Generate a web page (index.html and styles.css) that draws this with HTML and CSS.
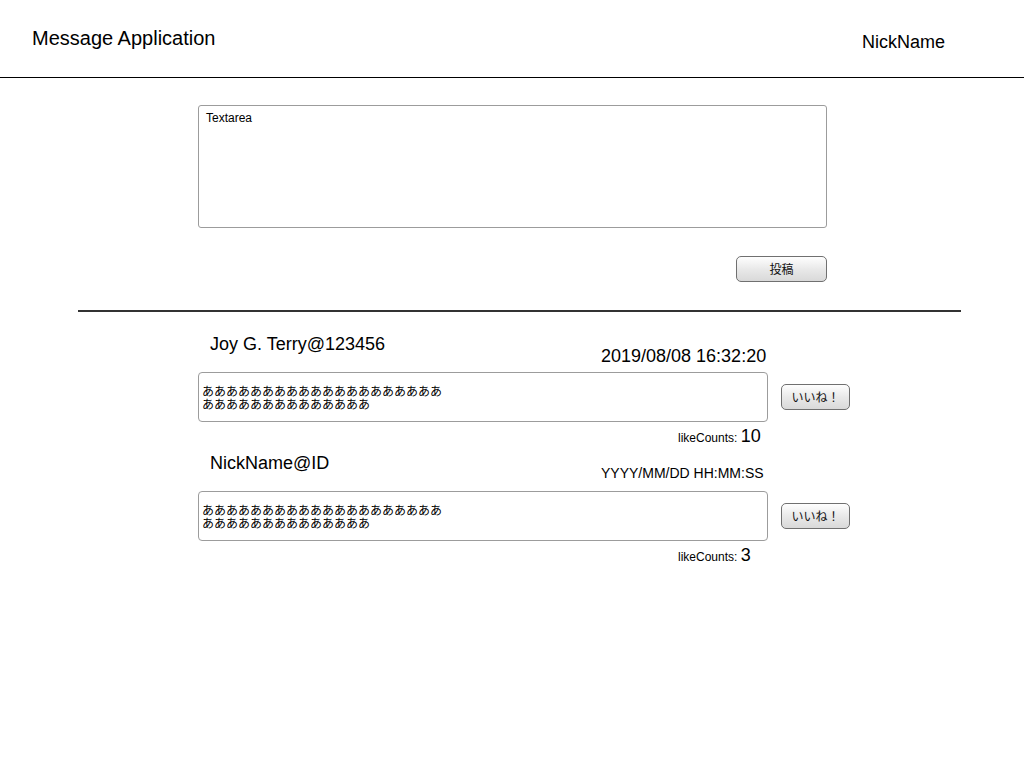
FILE: index.html
```html
<!DOCTYPE html>
<html lang="ja">
<head>
<meta charset="utf-8">
<title>Message Application</title>
<link rel="stylesheet" href="styles.css">
</head>
<body>
<header class="app-header">
  <h1 class="app-title">Message Application</h1>
  <div class="app-user">NickName</div>
</header>
<main>
  <section class="composer">
    <textarea class="composer-input">Textarea</textarea>
    <div class="composer-actions">
      <button class="btn btn-post">投稿</button>
    </div>
  </section>
  <hr class="divider">
  <section class="feed">
    <article class="post">
      <div class="post-head">
        <div class="post-user">Joy G. Terry@123456</div>
        <div class="post-date">2019/08/08 16:32:20</div>
      </div>
      <div class="post-body">
        <div class="post-message">ああああああああああああああああああああ<br>ああああああああああああああ</div>
        <button class="btn btn-like">いいね！</button>
      </div>
      <div class="post-likes">likeCounts: <span class="like-num">10</span></div>
    </article>
    <article class="post">
      <div class="post-head">
        <div class="post-user">NickName@ID</div>
        <div class="post-date post-date-small">YYYY/MM/DD HH:MM:SS</div>
      </div>
      <div class="post-body">
        <div class="post-message">ああああああああああああああああああああ<br>ああああああああああああああ</div>
        <button class="btn btn-like">いいね！</button>
      </div>
      <div class="post-likes">likeCounts: <span class="like-num">3</span></div>
    </article>
  </section>
</main>
</body>
</html>
```
FILE: styles.css
```css
* { box-sizing: border-box; }
html, body { margin: 0; padding: 0; background: #fff; }
body {
  font-family: "Liberation Sans", Arial, "Noto Sans CJK JP", sans-serif;
  color: #000;
}
.app-header {
  height: 78px;
  border-bottom: 1px solid #000;
  display: flex;
  justify-content: space-between;
  align-items: flex-start;
  padding: 27px 79px 0 32px;
}
.app-title {
  margin: 0;
  font-size: 20px;
  font-weight: normal;
  line-height: normal;
}
.app-user {
  font-size: 18px;
  margin-top: 5px;
}
.composer {
  width: 629px;
  margin: 27px 0 0 198px;
}
.composer-input {
  display: block;
  width: 629px;
  height: 123px;
  margin: 0;
  border: 1px solid #9c9c9c;
  border-radius: 3px;
  padding: 5px 7px;
  font-family: "Liberation Sans", Arial, sans-serif;
  font-size: 12px;
  line-height: 14px;
  color: #000;
  resize: none;
  outline: none;
}
.composer-actions {
  display: flex;
  justify-content: flex-end;
  margin-top: 28px;
}
.btn {
  font-family: "Noto Sans CJK JP", sans-serif;
  font-size: 12px;
  color: #111;
  height: 26px;
  padding: 0;
  border: 1px solid #707070;
  border-radius: 5px;
  background: linear-gradient(#fefefe, #e9e9e9 50%, #d9d9d9);
  line-height: 24px;
}
.btn-post { width: 91px; }
.divider {
  width: 883px;
  margin: 28px 0 0 78px;
  height: 2px;
  border: 0;
  background: #333;
}
.feed {
  width: 652px;
  margin: 20px 0 0 198px;
}
.post-head {
  height: 40px;
  padding-top: 2px;
  display: flex;
  align-items: flex-start;
}
.post-user {
  width: 403px;
  padding-left: 12px;
  font-size: 18px;
}
.post-date {
  margin-top: 12px;
  font-size: 18px;
}
.post-date-small { font-size: 14px; }
.post-body {
  display: flex;
  align-items: center;
  gap: 13px;
}
.post-message {
  width: 570px;
  height: 50px;
  border: 1px solid #9c9c9c;
  border-radius: 4px;
  padding: 0 3px;
  display: flex;
  align-items: center;
  font-family: "Noto Sans CJK JP", sans-serif;
  font-size: 12px;
  line-height: 13px;
}
.btn-like { width: 69px; }
.post-likes {
  height: 29px;
  padding: 5px 0 0 480px;
  font-size: 12px;
  line-height: 18px;
}
.like-num { font-size: 18px; }
```
